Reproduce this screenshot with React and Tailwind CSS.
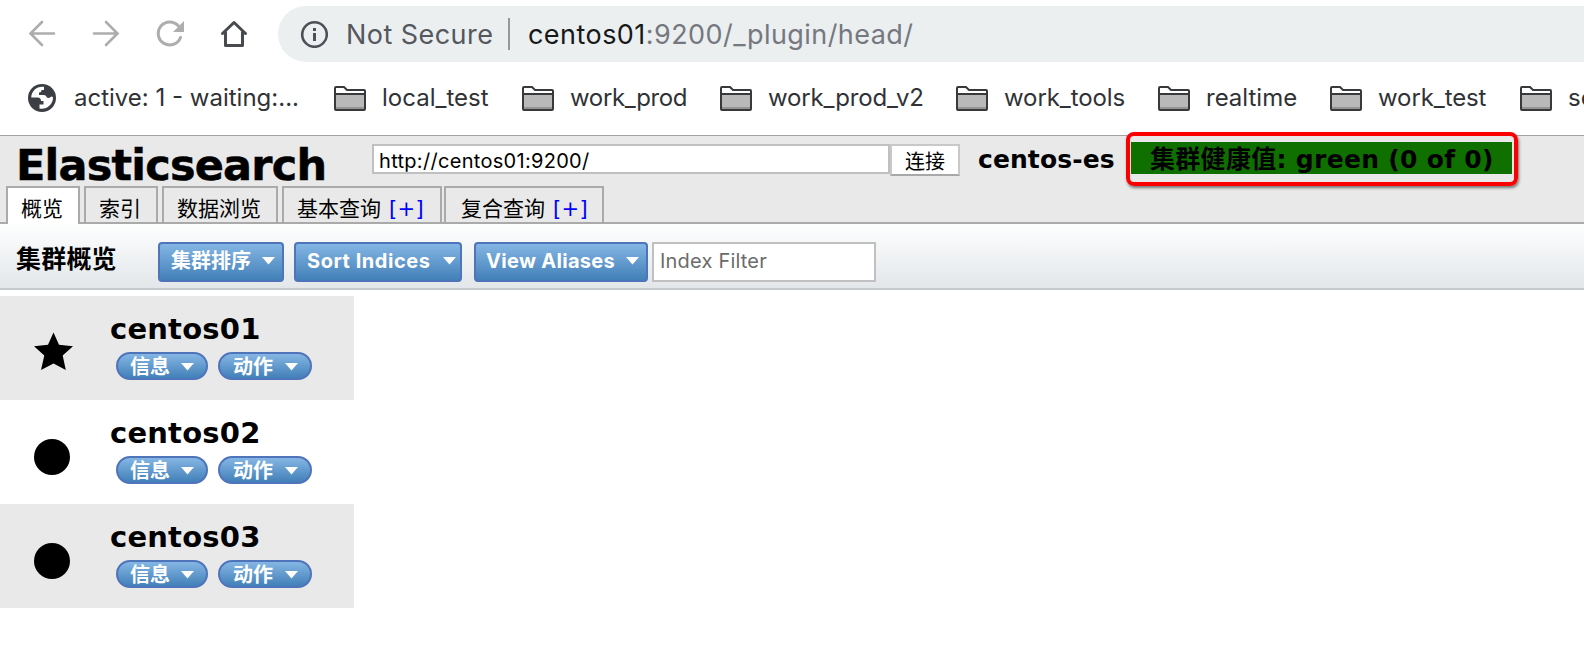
const folders = [
  { name: 'local_test', box: 'w-[188px]', text: 'tracking-[0px]' },
  { name: 'work_prod', box: 'w-[198px]', text: 'tracking-[-0.35px]' },
  { name: 'work_prod_v2', box: 'w-[236px]', text: 'tracking-[-0.15px]' },
  { name: 'work_tools', box: 'w-[202px]', text: 'tracking-[-0.1px]' },
  { name: 'realtime', box: 'w-[172px]', text: 'tracking-[0px]' },
  { name: 'work_test', box: 'w-[190px]', text: 'tracking-[-0.1px]' },
  { name: 'se', box: 'w-[160px]', text: 'tracking-[0px]' },
];

const tabs = [
  { name: '概览', box: 'w-[74px] pl-[13px]', active: true },
  { name: '索引', box: 'w-[74px] pl-[13px]' },
  { name: '数据浏览', box: 'w-[116px] pl-[13px]' },
  { name: '基本查询', box: 'w-[160px] pl-[13px]', plus: true },
  { name: '复合查询', box: '-ml-0.5 w-[160px] pl-[15px]', plus: true },
];

const nodes = [{ name: 'centos01', master: true }, { name: 'centos02' }, { name: 'centos03' }];

function Folder() {
  return (
    <svg className="h-[25px] w-8 shrink-0" viewBox="0 0 32 25">
      <path d="M1 23V2Q1 1 2 1H10L13 4H30Q31 4 31 5V23Q31 24 30 24H2Q1 24 1 23Z" fill="#fff" />
      <rect x="1" y="8" width="30" height="15" fill="#b9b9b9" />
      <rect x="1" y="21" width="30" height="2" fill="#949494" />
      <path d="M1 8H31M1 23V2Q1 1 2 1H10L13 4H30Q31 4 31 5V23Q31 24 30 24H2Q1 24 1 23Z" fill="none" stroke="#38393b" strokeWidth="2" />
    </svg>
  );
}

function Caret() {
  return (
    <svg className="h-[8px] w-[13px] shrink-0" viewBox="0 0 13 8">
      <path d="M0 0H13L6.5 7.5Z" fill="#fff" />
    </svg>
  );
}

function MenuButton({ label, box, text = '' }) {
  return (
    <div className={`flex h-10 shrink-0 items-center justify-between rounded-[4px] border-2 border-[#4f74ba] bg-linear-to-b from-[#84b6e4] to-[#4280b8] pl-[11px] text-white ${box}`}>
      <span className={`-mt-0.5 font-bold whitespace-nowrap ${text}`}>{label}</span>
      <span className="-mt-[3px] flex"><Caret /></span>
    </div>
  );
}

function Pill({ label, box, text }) {
  return (
    <div className={`flex h-7 items-center rounded-full border-2 border-[#4f74ba] bg-linear-to-b from-[#84b6e4] to-[#4280b8] text-white ${box}`}>
      <span className={`mt-px text-[20px] leading-6 font-bold whitespace-nowrap ${text}`}>{label}</span>
      <span className="mt-px flex"><Caret /></span>
    </div>
  );
}

export default function App() {
  return (
    <div className="flex h-[646px] w-[1584px] flex-col overflow-hidden bg-white font-['Inter','Noto_Sans_CJK_SC',sans-serif] text-black">
      <div className="flex h-[68px] shrink-0 items-start pt-[6px]">
        <div className="flex h-14 w-[278px] shrink-0 items-center pl-[28px]">
          <svg className="h-7 w-7" viewBox="0 0 28 28" fill="none" stroke="#adadad" strokeWidth="2.6" strokeLinecap="round">
            <path d="M26 13.500H3M14 2L2.500 13.500L14 25" />
          </svg>
          <svg className="ml-9 h-7 w-7" viewBox="0 0 28 28" fill="none" stroke="#adadad" strokeWidth="2.600" strokeLinecap="round">
            <path d="M2 13.500H25M14 2L25.500 13.500L14 25" />
          </svg>
          <svg className="ml-9 h-7 w-7" viewBox="0 0 28 28">
            <path d="M22.500 6A11.500 11.500 0 1 0 24.500 17.500" fill="none" stroke="#adadad" strokeWidth="3" strokeLinecap="round" />
            <path d="M28 1V12H17Z" fill="#adadad" />
          </svg>
          <svg className="ml-9 h-7 w-7" viewBox="0 0 28 28" fill="none" stroke="#474a4f" strokeWidth="3" strokeLinecap="round" strokeLinejoin="round">
            <path d="M2.500 13.500L14 2.500L25.500 13.500M5.500 12V25.500H22.500V12" />
          </svg>
        </div>
        <div className="flex h-14 flex-1 items-center rounded-l-full bg-[#ebeff0] pl-[22px] text-[27px]">
          <svg className="h-7 w-7 shrink-0" viewBox="0 0 28 28">
            <circle cx="14.500" cy="14.500" r="12.300" fill="none" stroke="#4d5056" strokeWidth="2.600" />
            <path d="M13 8H16V11H13ZM13 13H16V21H13Z" fill="#4d5056" />
          </svg>
          <span className="mt-0.5 ml-[18px] w-[162px] shrink-0 tracking-[0.45px] whitespace-nowrap text-[#55585e]">Not Secure</span>
          <span className="h-8 w-0.5 shrink-0 bg-[#96989c]" />
          <span className="mt-0.5 ml-[18px] tracking-[0.45px] whitespace-nowrap text-[#75787f]"><span className="text-[#17181a]">centos01</span>:9200/_plugin/head/</span>
        </div>
      </div>

      <div className="flex h-[67px] shrink-0 items-start pt-3 pl-[28px] text-[24px] leading-[36px] text-[#303236]">
        <div className="flex h-9 w-[306px] shrink-0 items-center">
          <svg className="h-7 w-7 shrink-0" viewBox="0 0 28 28">
            <circle cx="14" cy="14" r="14" fill="#3b3f44" />
            <path d="M16 3C9 2 3.500 7 3.200 13.500H9.500C12 13.500 13 15 13 17H15.500V20.500H11.500V24.500C18 26 25 21 25 13.500C23.500 11 22.500 14 20.500 14C17.500 14 19.500 11 15.500 11H11V8.500C13 8.500 13.500 7.500 13.500 6H16Z" fill="#fff" />
          </svg>
          <span className="ml-[18px] whitespace-nowrap">active: 1 - waiting:...</span>
        </div>
        {folders.map((f) => (
          <div key={f.name} className={`flex h-9 shrink-0 items-center ${f.box}`}>
            <Folder />
            <span className={`ml-4 whitespace-nowrap ${f.text}`}>{f.name}</span>
          </div>
        ))}
      </div>

      <div className="flex h-[89px] shrink-0 flex-col border-t border-b-2 border-t-[#a3a3a3] border-b-[#aaaaaa] bg-[#e9e9e9]">
        <div className="flex h-[50px] shrink-0 items-start">
          <h1 className="mt-[4px] w-[372px] shrink-0 pl-[16px] font-['DejaVu_Sans'] text-[43px] leading-[50px] font-bold tracking-[-0.8px] [-webkit-text-stroke:0.5px_black]">Elasticsearch</h1>
          <div className="mt-2 flex h-[30px] w-[518px] shrink-0 items-center border-2 border-[#c0c0c0] bg-white pt-[3px] pl-[5px] text-[20px] tracking-[0.3px]">http://centos01:9200/</div>
          <div className="mt-2 flex h-8 w-[70px] shrink-0 items-center justify-center border-2 border-[#c8c8c8] border-b-[#a8a8a8] bg-white pt-[3px] text-[20px]">连接</div>
          <div className="ml-[18px] w-[153px] shrink-0 pt-[9px] font-['DejaVu_Sans'] text-[25px] leading-[30px] font-bold tracking-[0.1px] whitespace-nowrap">centos-es</div>
          <div className="relative mt-[6px] flex h-8 w-[381px] shrink-0 items-center bg-[#0f7000] pt-[3px] pl-[19px] font-['DejaVu_Sans','Noto_Sans_CJK_SC'] text-[25px] leading-8 font-bold tracking-[0.3px] whitespace-nowrap">
            集群健康值: green (0 of 0)
            <span className="absolute -top-[10px] -left-[5px] h-[54px] w-[392px] rounded-[8px] border-4 border-[#fb0000] shadow-[1px_2px_3px_rgba(0,0,0,0.5)]" />
          </div>
        </div>
        <div className="-mb-0.5 flex h-[38px] shrink-0 items-start gap-1 pl-[6px] text-[21px]">
          {tabs.map((t) => (
            <div key={t.name} className={`flex items-center border-2 border-b-0 border-[#aaaaaa] pt-[8px] leading-[30px] whitespace-nowrap ${t.box} ${t.active ? 'h-[38px] bg-white pb-0.5' : 'h-9'}`}>
              {t.name}
              {t.plus && <span className="ml-2 font-['DejaVu_Sans'] text-[21px] tracking-[0.3px] text-[#0000ff]">[+]</span>}
            </div>
          ))}
        </div>
      </div>

      <div className="flex h-[66px] shrink-0 items-start border-b-2 border-[#c6cacd] bg-linear-to-b from-[#fdfefe] to-[#e3e7ea] pt-[18px] text-[20px]">
        <h2 className="w-[158px] shrink-0 pl-4 text-[25px] leading-[34px] font-bold tracking-[0.2px]">集群概览</h2>
        <MenuButton label="集群排序" box="w-[126px] pr-[7px]" />
        <div className="ml-[10px] flex"><MenuButton label="Sort Indices" text="tracking-[0.55px]" box="w-[168px] pr-[4px]" /></div>
        <div className="ml-3 flex"><MenuButton label="View Aliases" text="-ml-px tracking-[0.3px]" box="w-[174px] pr-[7px]" /></div>
        <div className="ml-1 flex h-10 w-[224px] items-center border-2 border-[#c0c0c0] bg-white pb-0.5 pl-[6px] tracking-[0.2px] text-[#6b6b6b]">Index Filter</div>
      </div>

      <div className="mt-[6px] flex w-[354px] flex-col">
        {nodes.map((n) => (
          <div key={n.name} className={`flex h-[104px] ${n.name === 'centos02' ? 'bg-white' : 'bg-[#e9e9e9]'}`}>
            <div className="w-[110px] shrink-0 pt-[36px] pl-[34px]">
              {n.master ? (
                <svg className="h-[39px] w-[39px]" viewBox="0 0 39 39">
                  <path d="M19.500 0.500L25 12.800L39 14.200L28.700 23.500L31.800 38L19.500 31.500L7 38L10.300 23.500L0 14.200L14 12.800Z" fill="#000" />
                </svg>
              ) : (
                <div className="mt-[3px] size-9 rounded-full bg-black" />
              )}
            </div>
            <div className="pt-[15px]">
              <div className="font-['DejaVu_Sans'] text-[29px] leading-9 font-bold tracking-[0.2px]">{n.name}</div>
              <div className="mt-[5px] ml-[6px] flex gap-[10px]">
                <Pill label="信息" box="w-[92px]" text="ml-3 mr-[11px]" />
                <Pill label="动作" box="w-[94px]" text="ml-[13px] mr-3" />
              </div>
            </div>
          </div>
        ))}
      </div>
    </div>
  );
}
